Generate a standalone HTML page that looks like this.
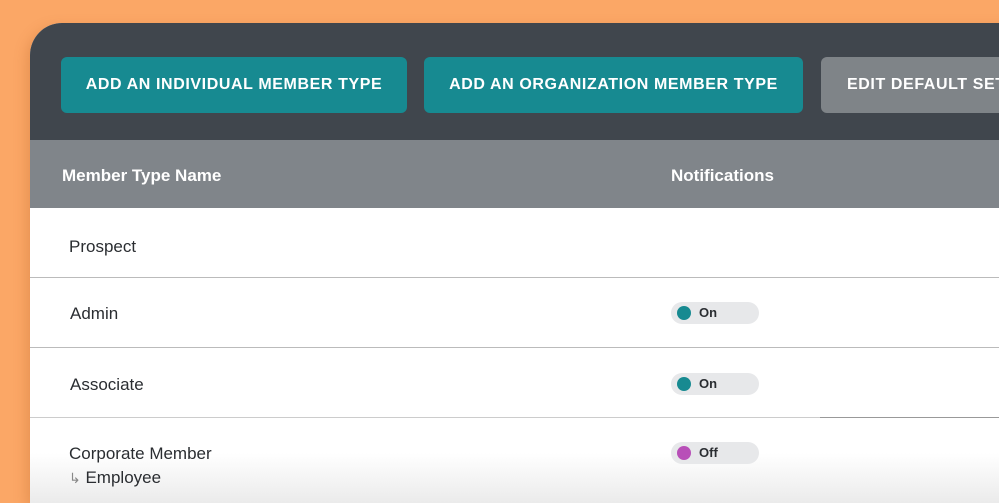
<!DOCTYPE html>
<html><head><meta charset="utf-8"><style>
*{margin:0;padding:0;box-sizing:border-box}
body{width:999px;height:490px;overflow:hidden;background:#fba766;font-family:"Liberation Sans",sans-serif;position:relative}
.card{position:absolute;left:30px;top:23px;width:1000px;height:480px;border-radius:32px 0 0 0;overflow:hidden;background:#fff;box-shadow:-4px 4px 12px rgba(180,90,30,.25)}
.top{position:absolute;left:0;top:0;width:100%;height:117px;background:#40464d}
.btn{position:absolute;top:34px;height:56px;border-radius:6px;color:#fff;font-weight:bold;font-size:16px;letter-spacing:.6px;display:flex;align-items:center;justify-content:center}
.teal{background:#178a91}
.gray{background:#7f8488;justify-content:flex-start;padding-left:26px}
.th{position:absolute;left:0;top:117px;width:100%;height:68px;background:#80858a;color:#fff;font-weight:bold;font-size:17px}
.th span{position:absolute;top:26px}
.row{position:absolute;left:0;width:100%;font-size:17px;color:#2a2d31;z-index:2}
.line{position:absolute;left:0;width:100%;height:1px;background:#bbb}
.tog{position:absolute;left:641px;width:88px;height:22px;border-radius:11px;background:#e7e8ea;font-size:13px;font-weight:bold;color:#2a2d31;z-index:2}
.tog i{position:absolute;left:6px;top:4px;width:14px;height:14px;border-radius:50%}
.tog b{position:absolute;left:28px;top:3px}
.fade{position:absolute;left:0;top:430px;width:100%;height:50px;background:linear-gradient(rgba(228,228,228,0),rgba(228,228,228,.75));z-index:1}
</style></head><body>
<div class="card">
<div class="top">
<div class="btn teal" style="left:31px;width:346px">ADD AN INDIVIDUAL MEMBER TYPE</div>
<div class="btn teal" style="left:394px;width:379px">ADD AN ORGANIZATION MEMBER TYPE</div>
<div class="btn gray" style="left:791px;width:300px">EDIT DEFAULT SETTINGS</div>
</div>
<div class="th"><span style="left:32px">Member Type Name</span><span style="left:641px">Notifications</span></div>
<div class="row" style="top:214px;left:39px">Prospect</div>
<div class="line" style="top:254px"></div>
<div class="row" style="top:281px;left:40px">Admin</div>
<div class="tog" style="top:279px"><i style="background:#178a91"></i><b>On</b></div>
<div class="line" style="top:324px"></div>
<div class="row" style="top:352px;left:40px">Associate</div>
<div class="tog" style="top:350px"><i style="background:#178a91"></i><b>On</b></div>
<div class="line" style="top:394px;background:#ccc"></div>
<div class="line" style="top:394px;left:790px;background:#999"></div>
<div class="row" style="top:421px;left:39px">Corporate Member</div>
<div class="row" style="top:445px;left:39px"><span style="color:#888;font-size:14px">&#8627;</span> Employee</div>
<div class="tog" style="top:419px"><i style="background:#b84fb8"></i><b>Off</b></div>
<div class="fade"></div>
</div>
</body></html>
